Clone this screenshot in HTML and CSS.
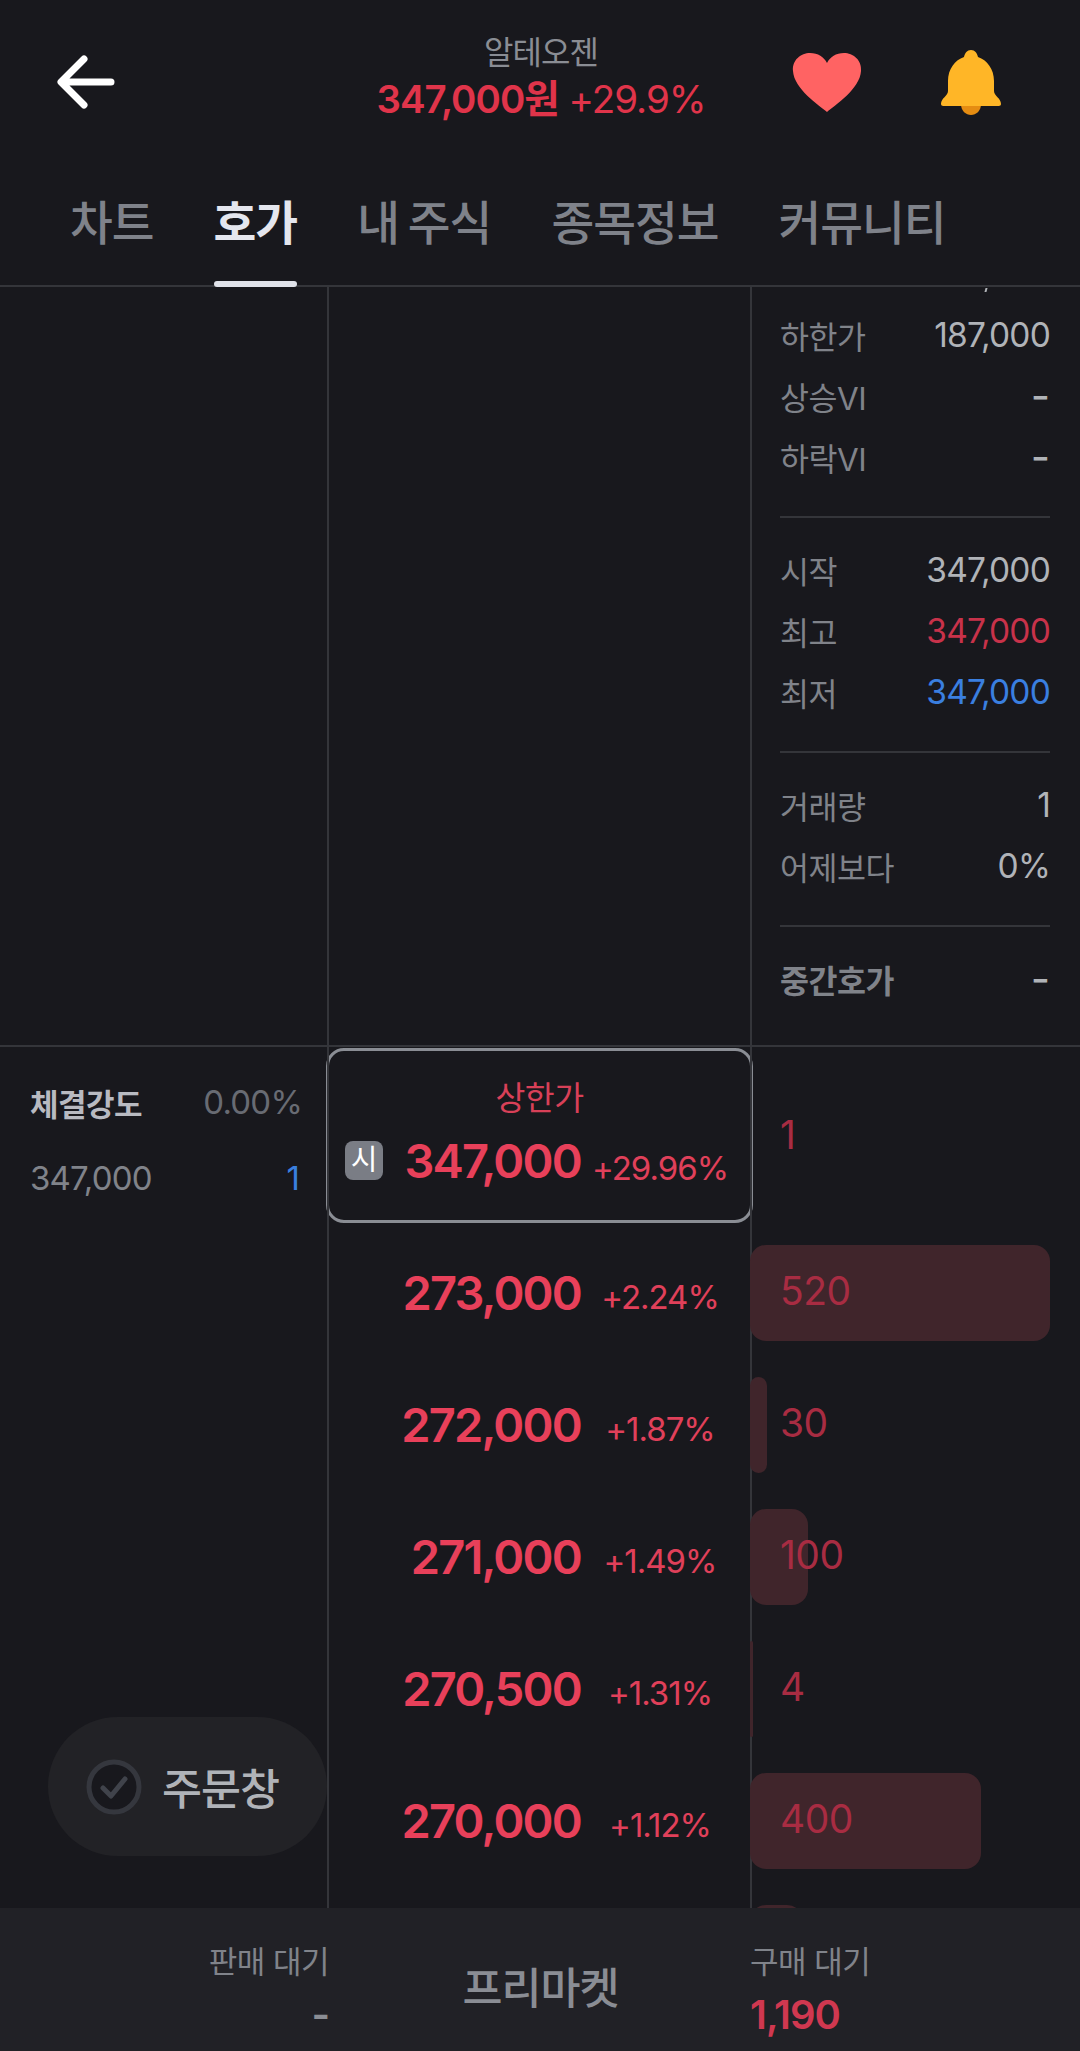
FILE: index.html
```html
<!DOCTYPE html>
<html lang="ko">
<head>
  <meta charset="UTF-8">
  <title>알테오젠 호가</title>
  <link rel="stylesheet" href="styles.css">
</head>
<body>
  <div class="app">

    <header class="top">
      <svg class="back" viewBox="0 0 60 54" width="60" height="54">
        <path d="M28 4 L5 27 L28 50 M6 27 L55 27" fill="none" stroke="#fff" stroke-width="7" stroke-linecap="round" stroke-linejoin="round"/>
      </svg>
      <div class="title">
        <div class="name">알테오젠</div>
        <div class="quote"><b>347,000원</b> +29.9%</div>
      </div>
      <svg class="heart" viewBox="0 0 70 60" width="70" height="60">
        <path d="M35 59 C27 52 2 36 1 18 C0 7 9 0 18 0 C26 0 32 4 35 10 C38 4 44 0 52 0 C61 0 70 7 69 18 C68 36 43 52 35 59 Z" fill="#ff6363"/>
      </svg>
      <svg class="bell" viewBox="0 0 62 66" width="62" height="66">
        <path d="M21 54 H41 C41 61 36 65 31 65 C26 65 21 61 21 54 Z" fill="#e58c12"/>
        <path d="M31 0 C35 0 37 3 38 7 C47 10 54 19 54 31 V41 C54 46 61 48 61 54 C61 56 59 56 57 56 H5 C3 56 1 56 1 54 C1 48 8 46 8 41 V31 C8 19 15 10 24 7 C25 3 27 0 31 0 Z" fill="#ffb627"/>
      </svg>
    </header>

    <nav class="tabs">
      <span class="tab">차트</span>
      <span class="tab active">호가</span>
      <span class="tab">내 주식</span>
      <span class="tab">종목정보</span>
      <span class="tab">커뮤니티</span>
    </nav>

    <main class="board">
      <section class="upper">
        <div class="col-left"></div>
        <div class="col-mid"></div>
        <div class="col-right stats">
          <div class="stat"><span>하한가</span><span class="val">187,000</span></div>
          <div class="stat"><span>상승VI</span><span class="val dash">-</span></div>
          <div class="stat"><span>하락VI</span><span class="val dash">-</span></div>
          <hr>
          <div class="stat"><span>시작</span><span class="val">347,000</span></div>
          <div class="stat"><span>최고</span><span class="val up">347,000</span></div>
          <div class="stat"><span>최저</span><span class="val down">347,000</span></div>
          <hr>
          <div class="stat"><span>거래량</span><span class="val">1</span></div>
          <div class="stat"><span>어제보다</span><span class="val">0%</span></div>
          <hr>
          <div class="stat"><strong>중간호가</strong><span class="val dash">-</span></div>
        </div>
      </section>

      <section class="lower">
        <div class="col-left trades">
          <div class="trade head"><strong>체결강도</strong><span class="rate">0.00%</span></div>
          <div class="trade"><span>347,000</span><span class="down">1</span></div>
          <button class="order">
            <svg viewBox="0 0 56 56" width="56" height="56">
              <circle cx="28" cy="28" r="25" fill="#18181d" stroke="#35373e" stroke-width="5"/>
              <path d="M17 29 L25 37 L39 20" fill="none" stroke="#40434b" stroke-width="5" stroke-linecap="round" stroke-linejoin="round"/>
            </svg>
            주문창
          </button>
        </div>

        <div class="col-mid prices">
          <div class="current">
            <div class="limit">상한가</div>
            <div class="current-line">
              <span class="badge">시</span>
              <span class="price">347,000</span>
              <span class="pct">+29.96%</span>
            </div>
          </div>
          <div class="row"><span class="price">273,000</span><span class="pct">+2.24%</span></div>
          <div class="row"><span class="price">272,000</span><span class="pct">+1.87%</span></div>
          <div class="row"><span class="price">271,000</span><span class="pct">+1.49%</span></div>
          <div class="row"><span class="price">270,500</span><span class="pct">+1.31%</span></div>
          <div class="row"><span class="price">270,000</span><span class="pct">+1.12%</span></div>
        </div>

        <div class="col-right volumes">
          <div class="vol first">1</div>
          <div class="vol"><i class="bar" style="width:300px"></i>520</div>
          <div class="vol"><i class="bar" style="width:17px"></i>30</div>
          <div class="vol"><i class="bar" style="width:58px"></i>100</div>
          <div class="vol"><i class="bar" style="width:3px"></i>4</div>
          <div class="vol"><i class="bar" style="width:231px"></i>400</div>
          <div class="vol"><i class="bar" style="width:53px"></i></div>
        </div>
      </section>
    </main>

    <footer class="bottom">
      <div class="wait left">
        <div class="wait-label">판매 대기</div>
        <div class="wait-num">-</div>
      </div>
      <div class="session">프리마켓</div>
      <div class="wait right">
        <div class="wait-label">구매 대기</div>
        <div class="wait-num up">1,190</div>
      </div>
    </footer>

  </div>
</body>
</html>
```

FILE: styles.css
```css
* {
  box-sizing: border-box;
}

html, body {
  margin: 0;
  background: #18181d;
}

body {
  font-family: Inter, "Noto Sans CJK KR", sans-serif;
  color: #b0b3b8;
}

.app {
  width: 1080px;
  height: 2051px;
  display: flex;
  flex-direction: column;
  overflow: hidden;
}

/* header */
.top {
  height: 160px;
  display: flex;
  align-items: flex-start;
  padding: 0 78px 0 56px;
}

.back {
  margin-top: 55px;
}

.title {
  flex: 1;
  margin: 32px 0 0 0;
  padding-left: 174px;
  text-align: center;
}

.name {
  font-size: 32px;
  line-height: 42px;
  letter-spacing: -1px;
  color: #8a8d94;
}

.quote {
  font-size: 38.5px;
  line-height: 51px;
  letter-spacing: -1px;
  color: #e0344a;
}

.quote b {
  font-weight: 600;
}

.heart {
  margin-top: 53px;
}

.bell {
  margin: 50px 0 0 78px;
}

/* tabs */
.tabs {
  height: 127px;
  display: flex;
  gap: 60px;
  padding-left: 70px;
  border-bottom: 2px solid #34353a;
}

.tab {
  position: relative;
  font-size: 46.5px;
  line-height: 126px;
  letter-spacing: -1px;
  word-spacing: -2.5px;
  font-weight: 500;
  color: #7f828a;
}

.tab.active {
  font-weight: 700;
  color: #e4e6ee;
}

.tab.active::after {
  content: "";
  position: absolute;
  left: 0;
  right: 0;
  bottom: -2px;
  height: 6px;
  border-radius: 3px;
  background: #e0e2ea;
}

/* board */
.board {
  flex: 1;
  overflow: hidden;
}

.upper, .lower {
  display: grid;
  grid-template-columns: 329px 423px 1fr;
}

.upper {
  height: 760px;
  border-bottom: 2px solid #34353a;
}

.lower {
  height: 900px;
}

.col-left {
  border-right: 2px solid #34353a;
}

.col-right {
  border-left: 2px solid #34353a;
  margin-left: -2px;
  min-width: 0;
}

/* stats */
.stats {
  position: relative;
  padding: 17px 30px 0 28px;
  overflow: hidden;
}

/* tail of the comma in the row scrolled away above */
.stats::before {
  content: "";
  position: absolute;
  left: 233px;
  top: 1px;
  width: 2px;
  height: 4px;
  background: #b0b3b8;
  transform: skewX(-15deg);
}

.stat {
  height: 61px;
  display: flex;
  justify-content: space-between;
  align-items: center;
  font-size: 31.5px;
  letter-spacing: -0.5px;
  color: #80838a;
}

.stat strong {
  font-weight: 700;
}

.val {
  font-size: 33.5px;
  letter-spacing: -0.8px;
  color: #b0b3b8;
}

.val.dash {
  font-size: 42px;
  letter-spacing: 0;
}

.up {
  color: #c8324a;
}

.val.up {
  color: #c8324a;
}

.val.down, .down {
  color: #3a7fe0;
}

.stats hr {
  border: 0;
  height: 2px;
  margin: 29px 0 21px;
  background: #34353a;
}

/* left column */
.trades {
  position: relative;
  padding: 17px 28px 0 30px;
}

.trade {
  height: 76px;
  display: flex;
  justify-content: space-between;
  align-items: center;
  font-size: 33px;
  letter-spacing: -0.8px;
  color: #80838a;
}

.trade.head strong {
  font-size: 31px;
  font-weight: 700;
  letter-spacing: -0.5px;
  color: #b8bac1;
}

.rate {
  margin-right: -3px;
  color: #686b73;
}

.order {
  position: absolute;
  left: 48px;
  top: 670px;
  width: 279px;
  height: 139px;
  display: flex;
  align-items: center;
  gap: 20px;
  padding: 0 0 0 38px;
  border: 0;
  border-radius: 70px;
  background: #222226;
  font-family: inherit;
  font-size: 43.5px;
  font-weight: 500;
  letter-spacing: -1px;
  color: #b0b3b8;
}

/* price column */
.prices {
  min-width: 0;
}

.current {
  height: 175px;
  margin: 1px -1px 0 -3px;
  padding-top: 28px;
  border: 3px solid #8a8d94;
  border-radius: 18px;
}

.limit {
  text-align: center;
  font-size: 32.5px;
  line-height: 40px;
  letter-spacing: -0.5px;
  color: #d84058;
}

.current-line {
  position: relative;
  display: flex;
  align-items: center;
  height: 72px;
  margin-top: 5px;
}

.current-line .price {
  position: absolute;
  right: 169px;
}

.current-line .pct {
  position: absolute;
  left: 263px;
  padding-top: 16px;
}

.badge {
  position: absolute;
  left: 16px;
  top: 17px;
  width: 38px;
  height: 39px;
  border-radius: 8px;
  background: #7a7d85;
  color: #fff;
  font-size: 29px;
  line-height: 37px;
  text-align: center;
}

.row {
  height: 132px;
  display: flex;
  align-items: center;
}

.row:nth-child(2) {
  margin-top: 3px;
}

.price {
  font-size: 47px;
  font-weight: 600;
  letter-spacing: -1.8px;
  color: #e8405a;
}

.row .price {
  width: 252px;
  text-align: right;
}

.pct {
  font-size: 33px;
  letter-spacing: -1px;
  color: #e0405a;
  padding-top: 9px;
}

.row .pct {
  width: 158px;
  text-align: center;
}

/* volumes */
.vol {
  position: relative;
  isolation: isolate;
  height: 132px;
  display: flex;
  align-items: center;
  padding: 0 0 5px 28px;
  font-size: 39px;
  letter-spacing: -0.5px;
  color: #a82c42;
}

.vol.first {
  height: 180px;
  padding-bottom: 6px;
}

.bar {
  position: absolute;
  z-index: -1;
  left: -2px;
  top: 18px;
  height: 96px;
  border-radius: 16px;
  background: #40252b;
}

/* footer */
.bottom {
  height: 143px;
  display: grid;
  grid-template-columns: 329px 423px 1fr;
  background: #212126;
}

.wait {
  padding-top: 34px;
}

.wait.left {
  text-align: right;
}

.wait.right {
  margin-left: -2px;
}

.wait-label {
  font-size: 31px;
  line-height: 40px;
  letter-spacing: -0.5px;
  color: #80838a;
}

.wait-num {
  font-size: 40px;
  font-weight: 600;
  line-height: 46px;
  margin-top: 10px;
  letter-spacing: -1px;
  color: #8a8d94;
}

.wait-num.up {
  color: #d03850;
}

.session {
  text-align: center;
  font-size: 43.5px;
  font-weight: 500;
  line-height: 160px;
  letter-spacing: -1px;
  color: #8a8d94;
}
```
